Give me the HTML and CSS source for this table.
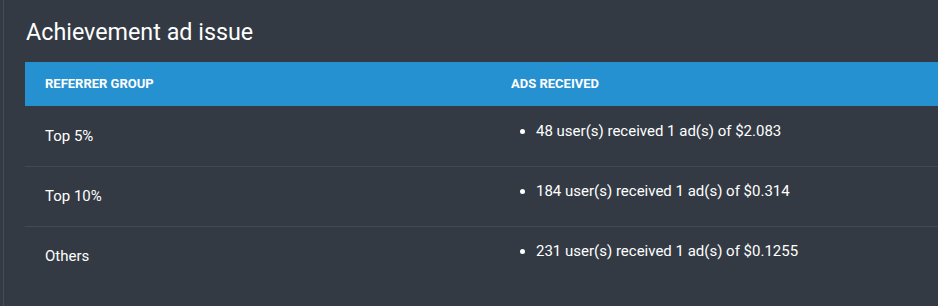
FILE: index.html
```html
<!DOCTYPE html>
<html>
<head>
<meta charset="utf-8">
<link rel="stylesheet" href="styles.css">
</head>
<body>
<div class="panel">
  <h1 class="title">Achievement ad issue</h1>
  <table class="grid">
    <thead>
      <tr><th class="col1">Referrer group</th><th>Ads received</th></tr>
    </thead>
    <tbody>
      <tr><td>Top 5%</td><td><ul class="list"><li>48 user(s) received 1 ad(s) of $2.083</li></ul></td></tr>
      <tr><td>Top 10%</td><td><ul class="list"><li>184 user(s) received 1 ad(s) of $0.314</li></ul></td></tr>
      <tr><td>Others</td><td><ul class="list"><li>231 user(s) received 1 ad(s) of $0.1255</li></ul></td></tr>
    </tbody>
  </table>
</div>
</body>
</html>
```
FILE: styles.css
```css
html, body {
  margin: 0;
  padding: 0;
  background: #333a44;
  height: 100%;
  overflow: hidden;
}
body {
  padding-left: 3px;
  font-family: Roboto, "Liberation Sans", sans-serif;
  color: #ffffff;
}
.panel {
  border-left: 1px solid #454d59;
  padding-left: 21px;
  min-height: 306px;
  box-sizing: border-box;
}
.title {
  margin: 0;
  padding: 18px 0 16px 1px;
  font-size: 23.3px;
  line-height: 28px;
  font-weight: 400;
  color: #ffffff;
}
.grid {
  width: 913px;
  border-collapse: collapse;
  table-layout: fixed;
}
.grid th {
  background: #2691d0;
  text-align: left;
  text-transform: uppercase;
  font-size: 13px;
  font-weight: 700;
  line-height: 20px;
  padding: 12px 20px;
  color: #ffffff;
}
.grid .col1 {
  width: 426px;
}
.grid td {
  font-size: 15px;
  line-height: 20px;
  padding: 14px 20px 15px;
  vertical-align: middle;
  border-top: 1px solid #414955;
}
.grid tbody tr:first-child td {
  border-top: none;
  padding-top: 15px;
}
.list {
  margin: 0 0 10px;
  padding-left: 25px;
}
```
